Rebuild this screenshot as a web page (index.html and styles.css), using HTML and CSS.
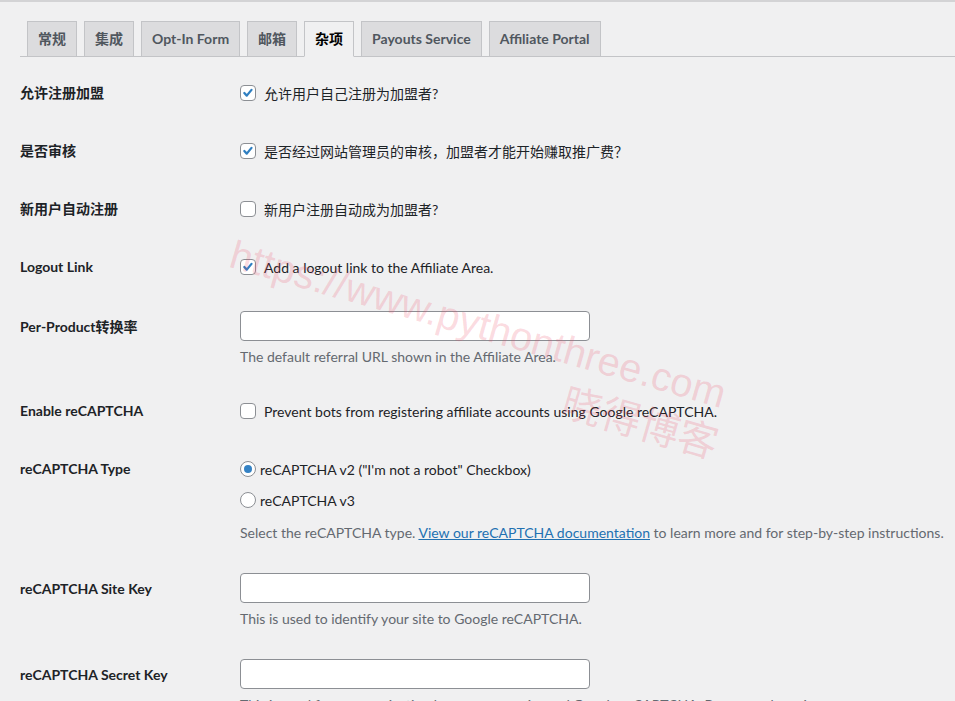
FILE: index.html
```html
<!DOCTYPE html>
<html lang="zh-CN">
<head>
<meta charset="UTF-8">
<meta name="viewport" content="width=device-width, initial-scale=1.0">
<title>杂项设置</title>
<link rel="stylesheet" href="styles.css">
</head>
<body>
<div class="wrap">
    <nav class="nav-tab-wrapper">
        <a class="nav-tab" href="#">常规</a>
        <a class="nav-tab" href="#">集成</a>
        <a class="nav-tab" href="#">Opt-In Form</a>
        <a class="nav-tab" href="#">邮箱</a>
        <a class="nav-tab nav-tab-active" href="#">杂项</a>
        <a class="nav-tab" href="#">Payouts Service</a>
        <a class="nav-tab" href="#">Affiliate Portal</a>
    </nav>

    <table class="form-table">
        <tr>
            <th>允许注册加盟</th>
            <td>
                <label class="option">
                    <span class="checkbox"><svg viewBox="0 0 16 16"><path d="M3.8 8 L6.6 11 L12 4.4"/></svg></span>
                    允许用户自己注册为加盟者?
                </label>
            </td>
        </tr>
        <tr>
            <th>是否审核</th>
            <td>
                <label class="option">
                    <span class="checkbox"><svg viewBox="0 0 16 16"><path d="M3.8 8 L6.6 11 L12 4.4"/></svg></span>
                    是否经过网站管理员的审核，加盟者才能开始赚取推广费？
                </label>
            </td>
        </tr>
        <tr>
            <th>新用户自动注册</th>
            <td>
                <label class="option">
                    <span class="checkbox"></span>
                    新用户注册自动成为加盟者?
                </label>
            </td>
        </tr>
        <tr>
            <th>Logout Link</th>
            <td>
                <label class="option">
                    <span class="checkbox"><svg viewBox="0 0 16 16"><path d="M3.8 8 L6.6 11 L12 4.4"/></svg></span>
                    Add a logout link to the Affiliate Area.
                </label>
            </td>
        </tr>
        <tr>
            <th class="field-label">Per-Product转换率</th>
            <td>
                <input type="text" class="regular-text">
                <p class="description">The default referral URL shown in the Affiliate Area.</p>
            </td>
        </tr>
        <tr>
            <th>Enable reCAPTCHA</th>
            <td>
                <label class="option">
                    <span class="checkbox"></span>
                    Prevent bots from registering affiliate accounts using Google reCAPTCHA.
                </label>
            </td>
        </tr>
        <tr>
            <th>reCAPTCHA Type</th>
            <td>
                <label class="option radio-option">
                    <span class="radio checked"></span>
                    reCAPTCHA v2 ("I'm not a robot" Checkbox)
                </label>
                <label class="option radio-option second">
                    <span class="radio"></span>
                    reCAPTCHA v3
                </label>
                <p class="description spaced">Select the reCAPTCHA type. <a href="#">View our reCAPTCHA documentation</a> to learn more and for step-by-step instructions.</p>
            </td>
        </tr>
        <tr>
            <th class="field-label">reCAPTCHA Site Key</th>
            <td>
                <input type="text" class="regular-text">
                <p class="description">This is used to identify your site to Google reCAPTCHA.</p>
            </td>
        </tr>
        <tr>
            <th class="field-label">reCAPTCHA Secret Key</th>
            <td>
                <input type="text" class="regular-text">
                <p class="description">This is used for communication between your site and Google reCAPTCHA. Be sure to keep it a secret.</p>
            </td>
        </tr>
    </table>
</div>

<div class="watermark">
    <div class="wm-url">https://www.pythonthree.com</div>
    <div class="wm-name">晓得博客</div>
</div>
</body>
</html>
```

FILE: styles.css
```css
html, body {
    margin: 0;
    background: #f0f0f1;
}
body {
    border-top: 2px solid #d3d3d5;
    font-family: Lato, "Noto Sans CJK SC", sans-serif;
    font-size: 14px;
    color: #1d2327;
    overflow: hidden;
    height: 699px;
    position: relative;
}
.wrap {
    margin-left: 20px;
}
.nav-tab-wrapper {
    display: flex;
    border-bottom: 1px solid #c3c4c7;
    padding-top: 19px;
}
.nav-tab {
    margin-left: 7px;
    margin-bottom: -1px;
    padding: 5px 10px;
    border: 1px solid #c3c4c7;
    background: #dcdcde;
    color: #50575e;
    font-size: 14px;
    font-weight: 700;
    line-height: 24px;
    text-decoration: none;
}
.nav-tab-active {
    background: #f0f0f1;
    border-bottom-color: #f0f0f1;
    color: #000;
}
.form-table {
    border-collapse: collapse;
    margin-top: 7px;
}
.form-table th {
    width: 200px;
    padding: 20px 10px 20px 0;
    text-align: left;
    vertical-align: top;
    font-weight: 700;
    line-height: 18px;
}
.form-table th.field-label {
    padding-top: 22px;
}
.form-table td {
    padding: 15px 10px;
    vertical-align: top;
}
.option {
    display: flex;
    align-items: center;
    gap: 8px;
    height: 28px;
    white-space: nowrap;
}
.radio-option {
    gap: 4px;
}
.radio-option.second {
    margin-top: 3px;
}
.checkbox {
    box-sizing: border-box;
    width: 16px;
    height: 16px;
    border: 1px solid #8c8f94;
    border-radius: 4px;
    background: #fff;
    flex: none;
}
.checkbox svg {
    display: block;
    width: 14px;
    height: 14px;
    fill: none;
    stroke: #2f7fc1;
    stroke-width: 2.6;
    stroke-linecap: round;
    stroke-linejoin: round;
}
.radio {
    box-sizing: border-box;
    width: 16px;
    height: 16px;
    border: 1px solid #8c8f94;
    border-radius: 50%;
    background: #fff;
    flex: none;
    display: flex;
    align-items: center;
    justify-content: center;
}
.radio.checked::before {
    content: "";
    width: 8px;
    height: 8px;
    border-radius: 50%;
    background: #3582c4;
}
.regular-text {
    display: block;
    box-sizing: border-box;
    width: 350px;
    height: 30px;
    margin: 0;
    border: 1px solid #8c8f94;
    border-radius: 4px;
    background: #fff;
}
.description {
    margin: 6px 0 0;
    color: #646970;
    line-height: 20px;
    white-space: nowrap;
}
.description.spaced {
    margin-top: 9px;
}
.description a {
    color: #2271b1;
}
.watermark {
    position: absolute;
    left: 238px;
    top: 228px;
    width: 520px;
    transform: rotate(16deg);
    transform-origin: 0 0;
    color: rgba(236, 70, 100, 0.2);
    font-size: 40px;
    line-height: 48px;
    pointer-events: none;
}
.wm-url {
    font-family: "Liberation Sans", sans-serif;
}
.wm-name {
    font-family: "Noto Sans CJK SC", sans-serif;
    text-align: right;
}
```
